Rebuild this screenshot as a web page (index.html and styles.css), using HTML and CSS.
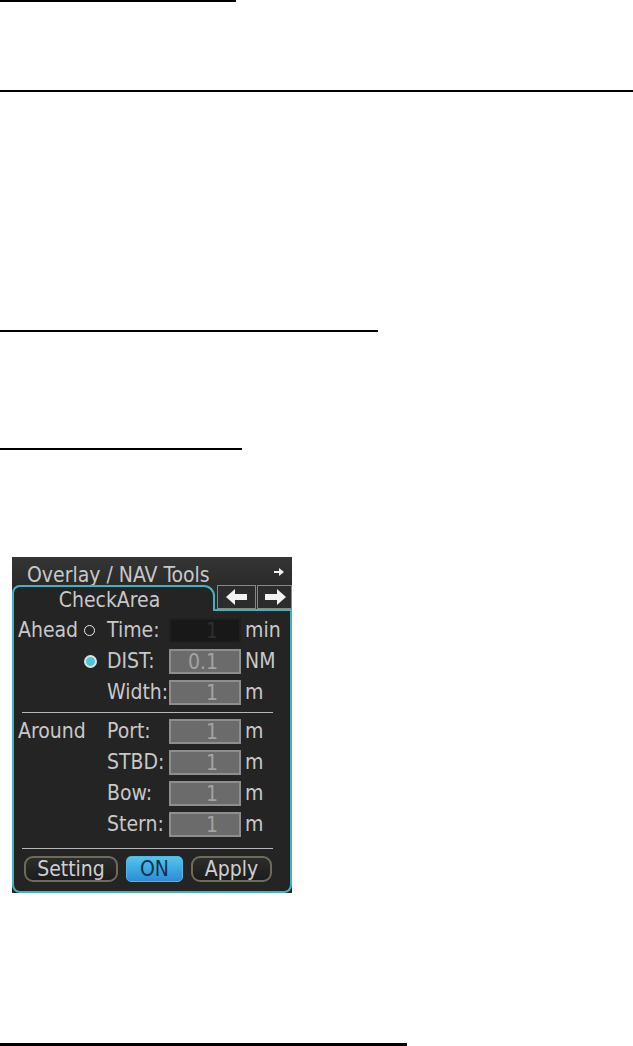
FILE: index.html
```html
<!DOCTYPE html>
<html lang="en">
<head>
    <meta charset="UTF-8">
    <meta name="viewport" content="width=device-width, initial-scale=1.0">
    <title>Check Area</title>
    <link rel="stylesheet" href="styles.css">
</head>
<body>

    <div class="rule rule-1"></div>
    <div class="rule rule-2"></div>
    <div class="rule rule-3"></div>
    <div class="rule rule-4"></div>

    <div class="panel">
        <div class="title-bar">
            <span class="title">Overlay / NAV Tools</span>
            <svg class="pin" width="10" height="8" viewBox="0 0 10 8">
                <polygon points="0,3 5,3 5,0 10,4 5,8 5,5 0,5" fill="#f0f0f0"/>
            </svg>
        </div>

        <div class="tab-row">
            <div class="tab">CheckArea</div>
            <div class="tab-nav">
                <button class="nav-btn">
                    <svg width="22" height="16" viewBox="0 0 22 16">
                        <polygon points="0,8 9,0 9,5 21,5 21,11 9,11 9,16" fill="#f2f2f2"/>
                    </svg>
                </button>
                <button class="nav-btn">
                    <svg width="22" height="16" viewBox="0 0 22 16">
                        <polygon points="22,8 13,0 13,5 1,5 1,11 13,11 13,16" fill="#f2f2f2"/>
                    </svg>
                </button>
            </div>
        </div>

        <div class="panel-body">
            <div class="section section-ahead">
                <div class="field-row">
                    <span class="group">Ahead</span>
                    <span class="radio"></span>
                    <span class="label">Time:</span>
                    <span class="box box-off">1</span>
                    <span class="unit">min</span>
                </div>
                <div class="field-row">
                    <span class="group"></span>
                    <span class="radio radio-on"></span>
                    <span class="label">DIST:</span>
                    <span class="box">0.1</span>
                    <span class="unit">NM</span>
                </div>
                <div class="field-row">
                    <span class="group"></span>
                    <span></span>
                    <span class="label">Width:</span>
                    <span class="box">1</span>
                    <span class="unit">m</span>
                </div>
            </div>

            <div class="divider"></div>

            <div class="section section-around">
                <div class="field-row">
                    <span class="group">Around</span>
                    <span></span>
                    <span class="label">Port:</span>
                    <span class="box">1</span>
                    <span class="unit">m</span>
                </div>
                <div class="field-row">
                    <span class="group"></span>
                    <span></span>
                    <span class="label">STBD:</span>
                    <span class="box">1</span>
                    <span class="unit">m</span>
                </div>
                <div class="field-row">
                    <span class="group"></span>
                    <span></span>
                    <span class="label">Bow:</span>
                    <span class="box">1</span>
                    <span class="unit">m</span>
                </div>
                <div class="field-row">
                    <span class="group"></span>
                    <span></span>
                    <span class="label">Stern:</span>
                    <span class="box">1</span>
                    <span class="unit">m</span>
                </div>
            </div>

            <div class="divider divider-bottom"></div>

            <div class="actions">
                <button class="action-btn btn-setting">Setting</button>
                <button class="action-btn btn-on">ON</button>
                <button class="action-btn btn-apply">Apply</button>
            </div>
        </div>
    </div>

    <div class="rule rule-5"></div>

</body>
</html>
```

FILE: styles.css
```css
body {
    margin: 0;
    background-color: #fff;
    font-family: "Liberation Sans", Arial, sans-serif;
}

.rule {
    background-color: #000;
    height: 2px;
}

.rule-1 {
    width: 236px;
}

.rule-2 {
    width: 633px;
    margin-top: 88px;
}

.rule-3 {
    width: 378px;
    margin-top: 238px;
}

.rule-4 {
    width: 242px;
    margin-top: 116px;
}

.rule-5 {
    width: 407px;
    height: 3px;
    margin-top: 150px;
}

/* panel */

.panel {
    margin: 107px 0 0 12px;
    width: 280px;
    background-color: #242424;
    color: #c8c8c8;
    font-family: "DejaVu Sans Condensed", "DejaVu Sans", sans-serif;
    font-stretch: condensed;
    font-size: 21px;
}

.title-bar {
    height: 28px;
    display: flex;
    align-items: center;
    justify-content: space-between;
    padding: 0 8px 0 15px;
    background: linear-gradient(#353535, #2a2a2a);
    line-height: 28px;
}

.title {
    margin-top: 7px;
}

.pin {
    margin-top: 2px;
}

.tab-row {
    display: flex;
    height: 26px;
    background-color: #2a2a2a;
}

.tab {
    width: 199px;
    border: 2px solid #41b3bd;
    border-bottom: none;
    border-radius: 8px 11px 0 0;
    background-color: #242424;
    text-align: center;
    line-height: 26px;
    padding-right: 8px;
}

.tab-nav {
    flex: 1;
    display: flex;
    gap: 1px;
    padding-left: 2px;
    border-bottom: 2px solid #41b3bd;
}

.nav-btn {
    width: 39px;
    height: 24px;
    padding: 0;
    border: 1px solid #8a8878;
    background-color: #2c2c2c;
    display: flex;
    align-items: center;
    justify-content: center;
}

.nav-btn + .nav-btn {
    width: 35px;
}

.panel-body {
    border: 2px solid #41b3bd;
    border-top: none;
    border-radius: 0 0 8px 8px;
    padding: 6px 0 9px 4px;
}

.section {
    display: flex;
    flex-direction: column;
    gap: 6px;
}

.field-row {
    display: grid;
    grid-template-columns: 67px 22px 62px 72px auto;
    align-items: center;
    height: 25px;
    line-height: 27px;
}

.group {
    white-space: nowrap;
}

.radio {
    width: 9px;
    height: 9px;
    border: 1.5px solid #ececec;
    border-radius: 50%;
    margin-left: -1px;
}

.radio-on {
    width: 9px;
    height: 9px;
    border: 2px solid #d8e4e6;
    background-color: #4ec6d6;
}

.label {
    white-space: nowrap;
}

.box {
    height: 21px;
    border: 2px solid #8e8e8e;
    background-color: #6b6b6b;
    color: #a3a3a3;
    text-align: right;
    padding-right: 21px;
    line-height: 22px;
}

.box-off {
    border-color: #1f1f1f;
    background-color: #181818;
    color: #2e2e2e;
}

.unit {
    padding-left: 4px;
}

.divider {
    height: 1px;
    background-color: #b8b8b8;
    margin: 8px 17px 5px 4px;
}

.divider-bottom {
    margin: 12px 17px 7px 4px;
}

.actions {
    display: flex;
    gap: 8px;
    padding-left: 6px;
}

.action-btn {
    height: 26px;
    font-family: "DejaVu Sans Condensed", "DejaVu Sans", sans-serif;
    font-stretch: condensed;
    font-size: 21px;
    color: #cfcfcf;
    border: 2px solid #6f6c56;
    border-radius: 9px;
    background: linear-gradient(#2c2c2c, #1c1c1c);
    padding: 0;
    line-height: 22px;
}

.btn-setting {
    width: 94px;
}

.btn-on {
    width: 57px;
    border: 1px solid #56b6e0;
    border-radius: 5px;
    background: linear-gradient(#52c6ea, #2b8cd6);
    color: #15304e;
}

.btn-apply {
    width: 81px;
}
```
